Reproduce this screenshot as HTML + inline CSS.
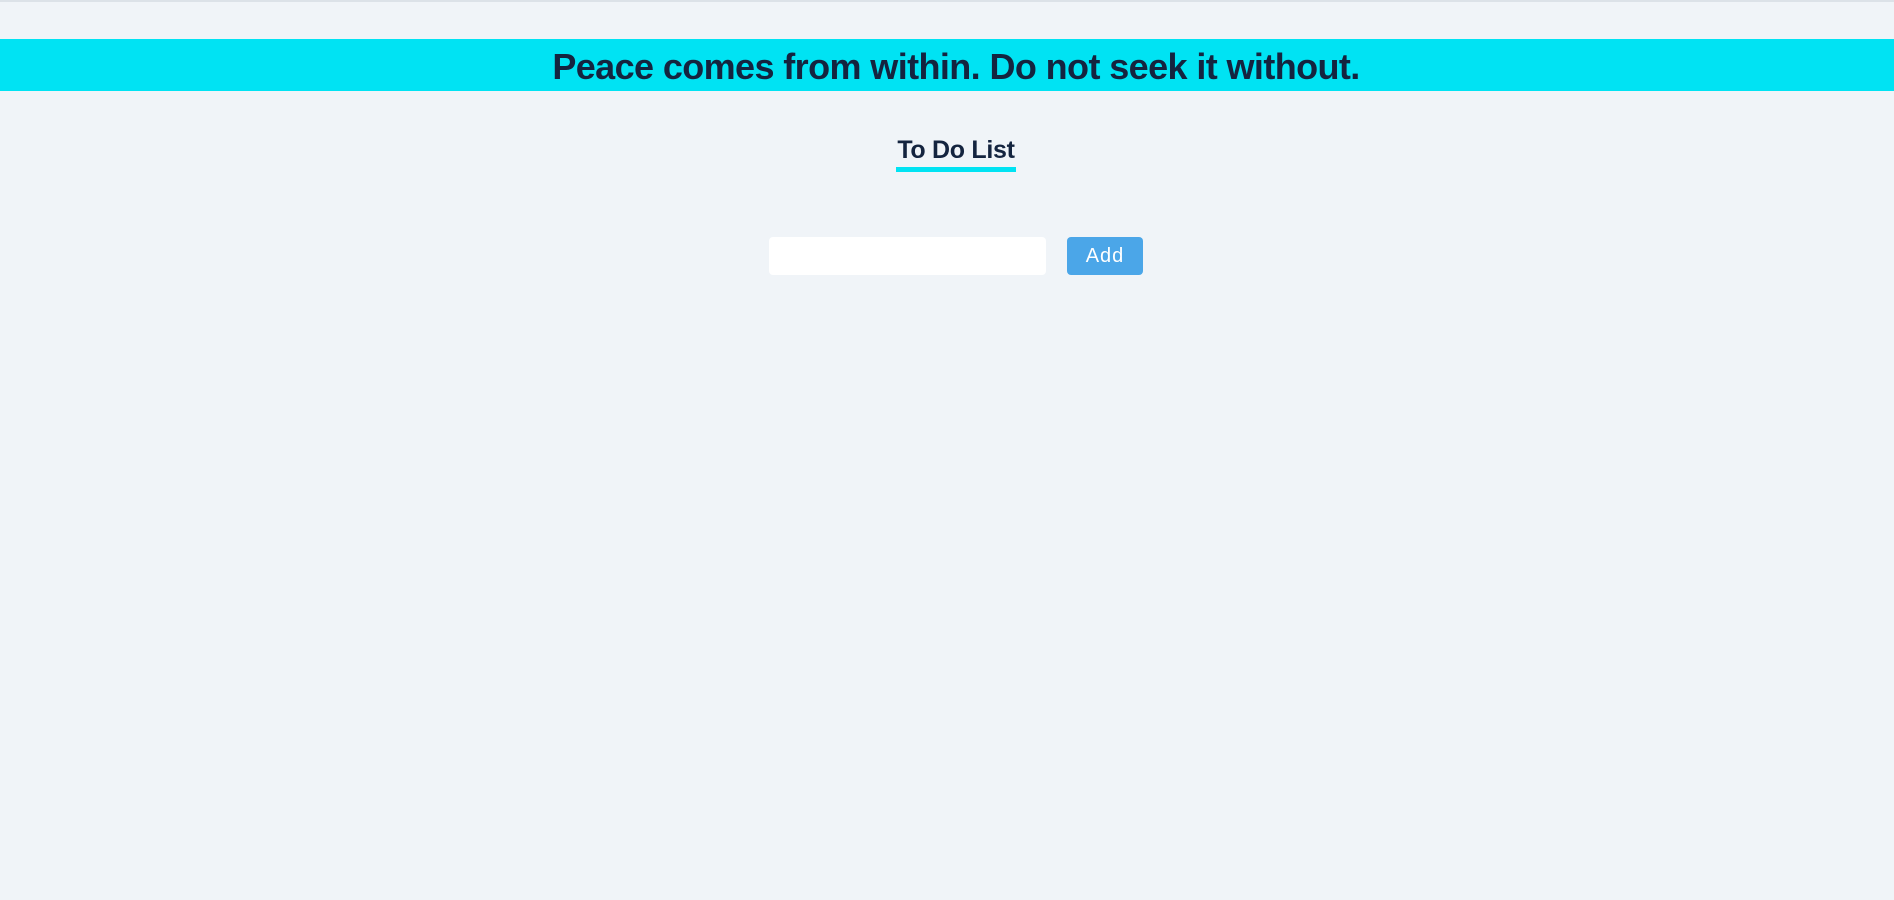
<!DOCTYPE html>
<html><head><style>
html,body{margin:0;padding:0;width:1894px;height:900px;background:#f0f4f8;font-family:"Liberation Sans",sans-serif;overflow:hidden;position:relative}
.top{position:absolute;left:0;top:0;width:100%;height:2px;background:#dce2e8}
.banner{position:absolute;left:0;top:39px;width:100%;height:52px;background:#00e3f3;color:#14243f;font-weight:bold;font-size:36px;line-height:56px;text-align:center;letter-spacing:-0.6px;text-indent:18px}
.h{position:absolute;left:880px;top:135px;width:152px;text-align:center;color:#14243f;font-weight:bold;font-size:25px;line-height:30px;letter-spacing:-0.3px}
.ul{position:absolute;left:896px;top:167px;width:120px;height:5px;background:#00e3f3}
.in{position:absolute;left:769px;top:237px;width:277px;height:38px;background:#fff;border-radius:4px}
.btn{position:absolute;left:1067px;top:237px;width:76px;height:38px;background:#4ba6e8;border-radius:4px;color:#fff;font-size:20px;line-height:38px;text-align:center;letter-spacing:1px}
</style></head><body>
<div class="top"></div>
<div class="banner">Peace comes from within. Do not seek it without.</div>
<div class="h">To Do List</div>
<div class="ul"></div>
<div class="in"></div>
<div class="btn">Add</div>
</body></html>
